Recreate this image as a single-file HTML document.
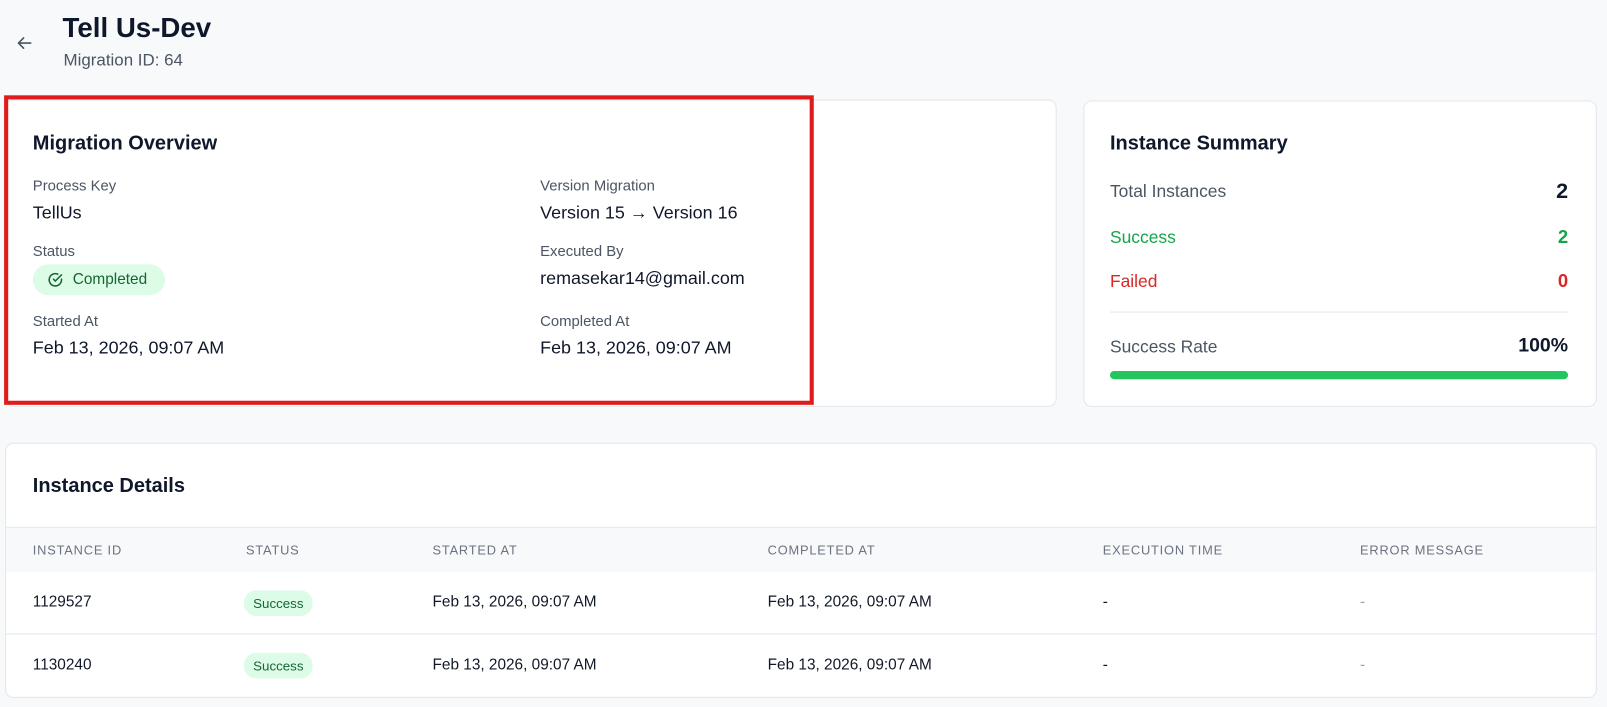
<!DOCTYPE html>
<html><head><meta charset="utf-8"><style>
*{box-sizing:border-box;margin:0;padding:0}
body{width:1607px;height:707px;background:#f8f9fb;font-family:"Liberation Sans",sans-serif;color:#0f172a;position:relative;overflow:hidden}
#w{position:absolute;left:0;top:0;width:1568px;height:690px;transform:scale(1.0249);transform-origin:0 0}
.a{position:absolute;white-space:nowrap}
.card{position:absolute;background:#fff;border:1px solid #e3e6ea;border-radius:8px}
.lbl{font-size:14.5px;color:#4b5563}
.val{font-size:17.5px;color:#0f172a}
.th{font-size:12.5px;color:#6b7280;letter-spacing:.8px}
.td{font-size:15px;color:#111827}
.pill{position:absolute;background:#dcfce7;color:#166534;border-radius:12px;font-size:13px;padding:5px 9px}
</style></head><body><div id="w">
<svg class="a" style="left:15px;top:33px" width="18" height="18" viewBox="0 0 18 18" fill="none" stroke="#4b5563" stroke-width="1.6" stroke-linecap="round" stroke-linejoin="round"><path d="M15 9H3M8 4L3 9l5 5"/></svg>
<div class="a" style="left:61px;top:12px;font-size:27px;font-weight:bold">Tell Us-Dev</div>
<div class="a" style="left:62px;top:50px;font-size:16.5px;color:#4b5563">Migration ID: 64</div>

<div class="card" style="left:5px;top:97px;width:1026px;height:300px"></div>
<div class="a" style="left:4px;top:93px;width:790px;height:302px;border:4px solid #e01b1b"></div>
<div class="a" style="left:32px;top:129px;font-size:19.5px;font-weight:bold">Migration Overview</div>
<div class="a lbl" style="left:32px;top:174px">Process Key</div>
<div class="a val" style="left:32px;top:197px">TellUs</div>
<div class="a lbl" style="left:32px;top:238px">Status</div>
<div class="a" style="left:32px;top:258px;width:129px;height:30px;background:#dcfce7;border-radius:15px"></div>
<svg class="a" style="left:46px;top:265px" width="16" height="16" viewBox="0 0 16 16" fill="none" stroke="#166534" stroke-width="1.5" stroke-linecap="round"><path d="M14 7.4V8a6 6 0 1 1-3.6-5.5"/><path d="M14 3.2L8 9.2 6.2 7.4"/></svg>
<div class="a" style="left:71px;top:264px;font-size:15px;color:#166534">Completed</div>
<div class="a lbl" style="left:32px;top:306px">Started At</div>
<div class="a val" style="left:32px;top:329px">Feb 13, 2026, 09:07 AM</div>
<div class="a lbl" style="left:527px;top:174px">Version Migration</div>
<div class="a val" style="left:527px;top:197px">Version 15 → Version 16</div>
<div class="a lbl" style="left:527px;top:238px">Executed By</div>
<div class="a val" style="left:527px;top:261px">remasekar14@gmail.com</div>
<div class="a lbl" style="left:527px;top:306px">Completed At</div>
<div class="a val" style="left:527px;top:329px">Feb 13, 2026, 09:07 AM</div>

<div class="card" style="left:1057px;top:98px;width:501px;height:299px"></div>
<div class="a" style="left:1083px;top:129px;font-size:19.5px;font-weight:bold">Instance Summary</div>
<div class="a" style="left:1083px;top:177px;font-size:17px;color:#4b5563">Total Instances</div>
<div class="a" style="left:1500px;top:175px;width:30px;text-align:right;font-size:21px;font-weight:bold">2</div>
<div class="a" style="left:1083px;top:222px;font-size:17px;color:#16a34a">Success</div>
<div class="a" style="left:1500px;top:221px;width:30px;text-align:right;font-size:18px;color:#16a34a;font-weight:bold">2</div>
<div class="a" style="left:1083px;top:265px;font-size:17px;color:#dc2626">Failed</div>
<div class="a" style="left:1500px;top:264px;width:30px;text-align:right;font-size:18px;color:#dc2626;font-weight:bold">0</div>
<div class="a" style="left:1083px;top:304px;width:447px;height:1px;background:#e5e7eb"></div>
<div class="a" style="left:1083px;top:329px;font-size:17px;color:#4b5563">Success Rate</div>
<div class="a" style="left:1430px;top:327px;width:100px;text-align:right;font-size:19px;font-weight:bold">100%</div>
<div class="a" style="left:1083px;top:362px;width:447px;height:8px;background:#22c55e;border-radius:4px"></div>

<div class="card" style="left:5px;top:432px;width:1553px;height:249px;overflow:hidden">
<div class="a" style="left:0;top:81px;width:100%;height:44px;background:#f8f9fb;border-top:1px solid #e5e7eb"></div>
<div class="a" style="left:0;top:185px;width:100%;height:1px;background:#e5e7eb"></div>
</div>
<div class="a" style="left:32px;top:463px;font-size:19.5px;font-weight:bold">Instance Details</div>
<div class="a th" style="left:32px;top:530px">INSTANCE ID</div>
<div class="a th" style="left:240px;top:530px">STATUS</div>
<div class="a th" style="left:422px;top:530px">STARTED AT</div>
<div class="a th" style="left:749px;top:530px">COMPLETED AT</div>
<div class="a th" style="left:1076px;top:530px">EXECUTION TIME</div>
<div class="a th" style="left:1327px;top:530px">ERROR MESSAGE</div>

<div class="a td" style="left:32px;top:579px">1129527</div>
<div class="pill" style="left:238px;top:576px">Success</div>
<div class="a td" style="left:422px;top:579px">Feb 13, 2026, 09:07 AM</div>
<div class="a td" style="left:749px;top:579px">Feb 13, 2026, 09:07 AM</div>
<div class="a td" style="left:1076px;top:579px">-</div>
<div class="a td" style="left:1327px;top:579px;color:#9ca3af">-</div>

<div class="a td" style="left:32px;top:640px">1130240</div>
<div class="pill" style="left:238px;top:637px">Success</div>
<div class="a td" style="left:422px;top:640px">Feb 13, 2026, 09:07 AM</div>
<div class="a td" style="left:749px;top:640px">Feb 13, 2026, 09:07 AM</div>
<div class="a td" style="left:1076px;top:640px">-</div>
<div class="a td" style="left:1327px;top:640px;color:#9ca3af">-</div>
</div></body></html>
